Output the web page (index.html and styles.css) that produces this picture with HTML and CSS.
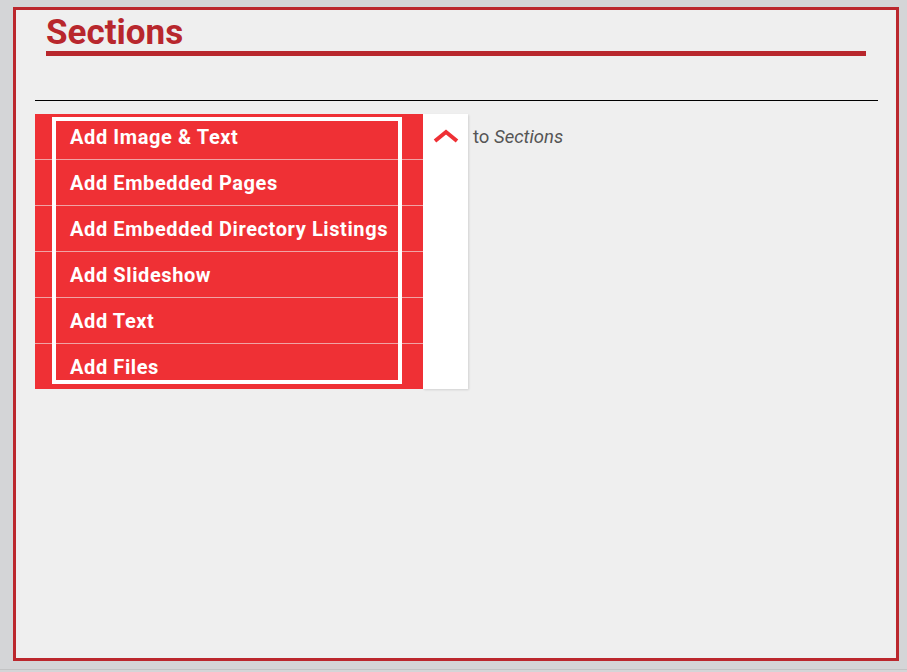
FILE: index.html
```html
<!DOCTYPE html>
<html lang="en">
<head>
<meta charset="utf-8">
<title>Sections</title>
<link rel="stylesheet" href="styles.css">
</head>
<body>
<div class="page">
  <div class="frame">
    <header class="head">
      <h1 class="title">Sections</h1>
      <div class="title-bar"></div>
    </header>
    <hr class="rule">
    <div class="picker-row">
      <div class="picker">
        <ul class="options">
          <li class="option">Add Image &amp; Text</li>
          <li class="option">Add Embedded Pages</li>
          <li class="option">Add Embedded Directory Listings</li>
          <li class="option">Add Slideshow</li>
          <li class="option">Add Text</li>
          <li class="option">Add Files</li>
        </ul>
        <div class="focus-ring"></div>
      </div>
      <div class="toggle">
        <svg class="chev" width="26" height="14" viewBox="0 0 26 14"><polyline points="2,12 13,3 24,12" fill="none" stroke="#ef3035" stroke-width="4" stroke-linejoin="miter"/></svg>
      </div>
      <div class="hint">to <em>Sections</em></div>
    </div>
  </div>
</div>
</body>
</html>
```

FILE: styles.css
```css
html, body {
  margin: 0;
  padding: 0;
  background: #d4d5d7;
  font-family: Roboto, "Liberation Sans", sans-serif;
}
.page {
  height: 670px;
  border-bottom: 1px solid #c2c3c4;
  padding: 7px 0 0 13px;
  box-sizing: border-box;
}
.frame {
  width: 886px;
  height: 654px;
  box-sizing: border-box;
  border: 3px solid #bb272d;
  background: #efefef;
}
.head {
  padding: 4px 30px 0 30px;
}
.title {
  margin: 0;
  font-size: 35px;
  line-height: 37px;
  font-weight: 700;
  color: #b8272d;
}
.title-bar {
  height: 5px;
  background: #b8272d;
}
.rule {
  margin: 44px 18px 0 19px;
  border: 0;
  border-top: 1px solid #000;
  height: 0;
}
.picker-row {
  margin: 13px 0 0 19px;
  display: flex;
  align-items: flex-start;
}
.picker {
  position: relative;
  width: 388px;
  background: #ef3035;
}
.options {
  list-style: none;
  margin: 0;
  padding: 0;
}
.option {
  height: 45px;
  line-height: 46px;
  padding-left: 35px;
  border-bottom: 1px solid #f0a3a5;
  color: #fff;
  font-weight: 700;
  font-size: 20px;
  letter-spacing: 0.6px;
  white-space: nowrap;
}
.option:last-child {
  border-bottom: 0;
}
.focus-ring {
  position: absolute;
  left: 17px;
  top: 3px;
  width: 350px;
  height: 267px;
  box-sizing: border-box;
  border: 4px solid #fff;
}
.toggle {
  width: 45px;
  height: 275px;
  background: #fff;
  box-shadow: 1px 1px 2px rgba(0,0,0,0.12);
  display: flex;
  justify-content: center;
  padding-top: 15px;
  box-sizing: border-box;
}
.chev {
  display: block;
}
.hint {
  margin-left: 5px;
  line-height: 47px;
  font-size: 18.5px;
  color: #555;
}
.hint em {
  font-style: italic;
}
```
